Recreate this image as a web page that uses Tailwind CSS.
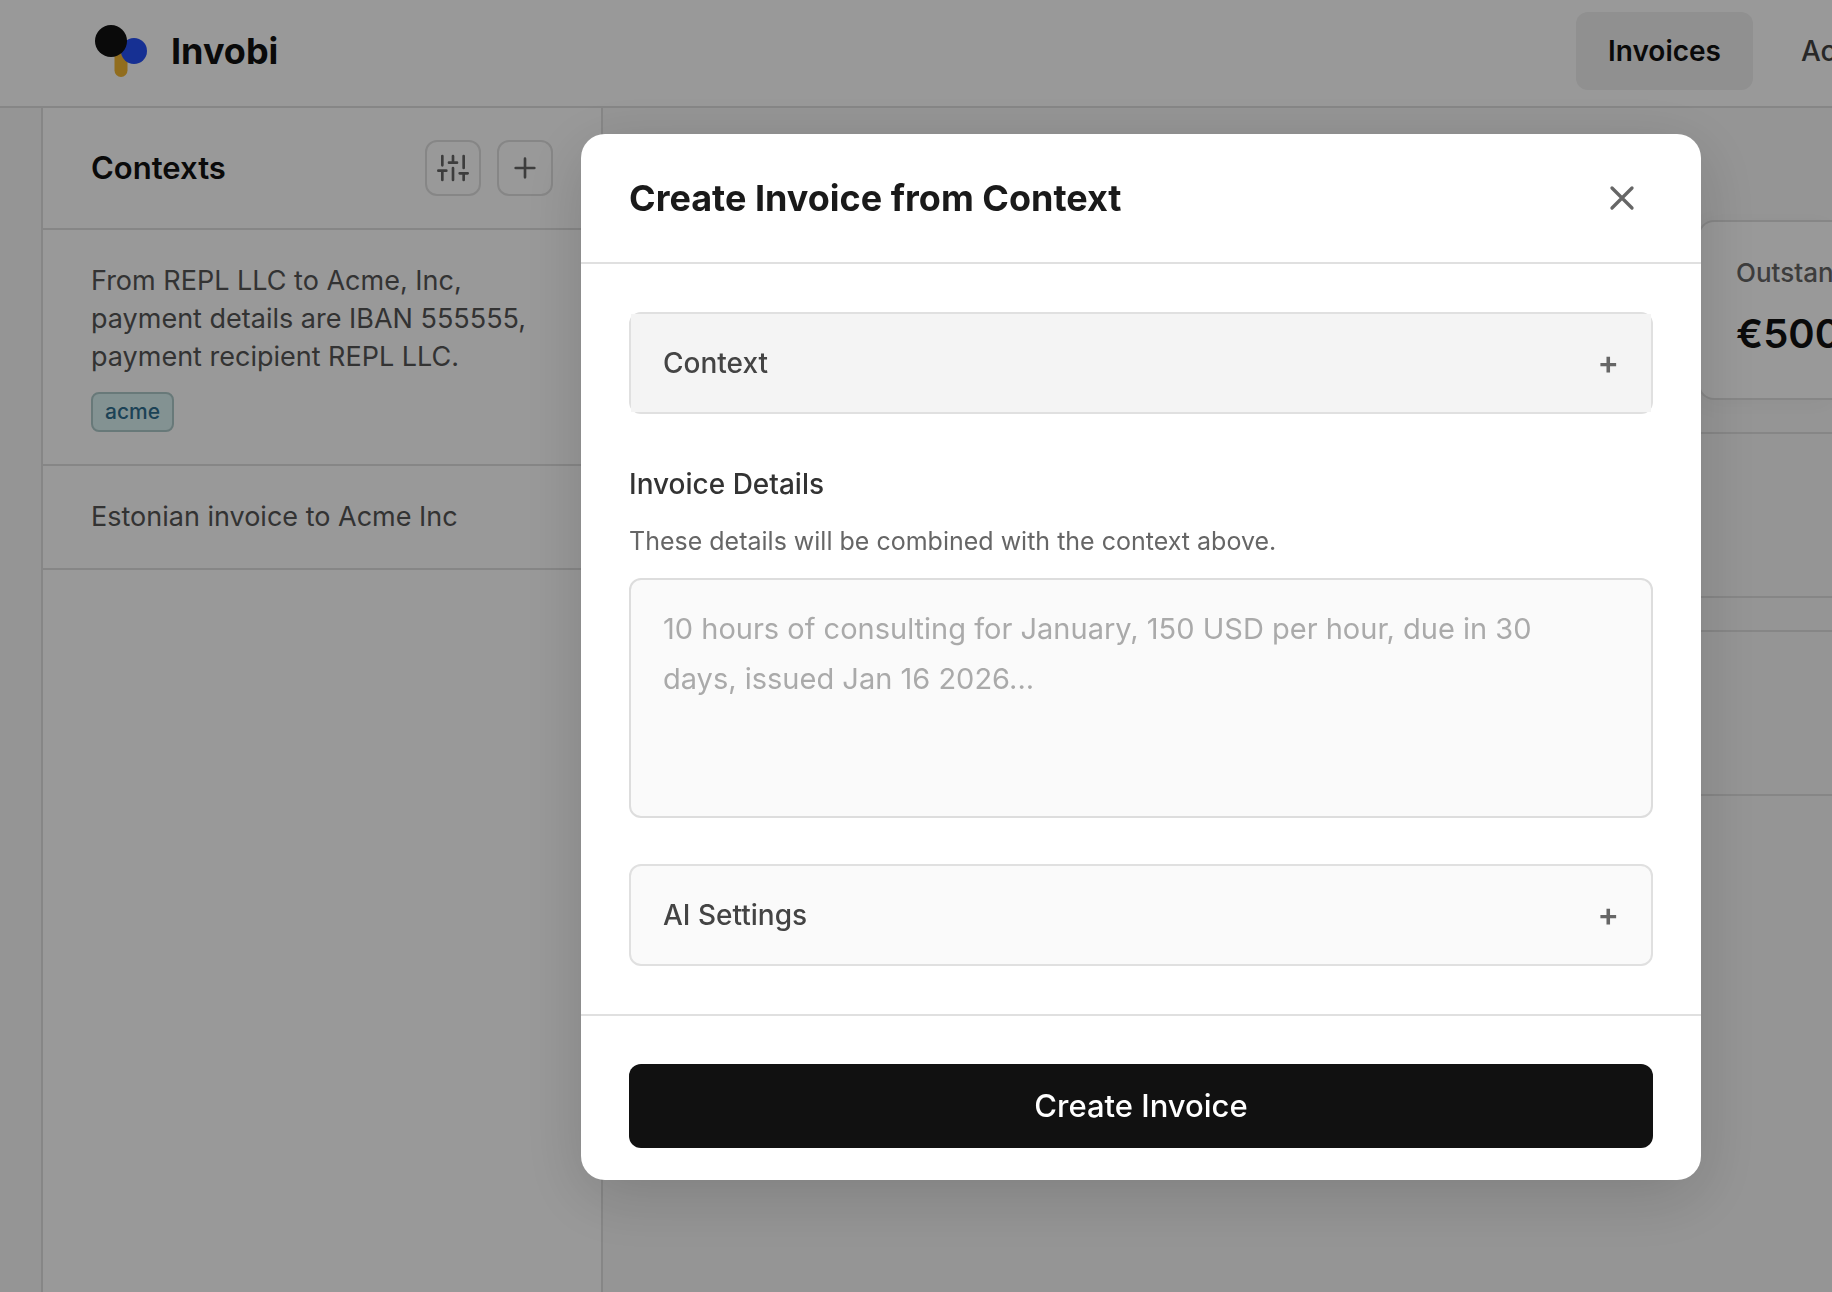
<!DOCTYPE html>
<html lang="en">
<head>
  <meta charset="UTF-8" />
  <meta name="viewport" content="width=device-width, initial-scale=1.0" />
  <title>Invobi</title>
  <script src="https://cdn.jsdelivr.net/npm/@tailwindcss/browser@4"></script>
</head>
<body class="flex h-screen flex-col overflow-hidden bg-[#f9f9f9] font-['Inter',sans-serif] text-[#111]">

  <!-- Header -->
  <header class="flex items-center overflow-hidden border-b-2 border-[#e0e0e0] bg-white pt-3 pb-4 pl-[95px]">
    <a href="#" class="flex items-center gap-6">
      <svg class="h-[52px] w-[52px]" viewBox="0 0 52 52" aria-hidden="true">
        <rect x="19.5" y="22" width="13" height="30" rx="6.5" fill="#f2b632" />
        <circle cx="39" cy="26" r="13" fill="#2550f5" />
        <circle cx="16" cy="16" r="16" fill="#111" />
      </svg>
      <span class="text-[36px] leading-none font-bold">Invobi</span>
    </a>
    <nav class="ml-auto flex w-64 shrink-0 gap-4 text-[28px] leading-[42px]">
      <a href="#" class="shrink-0 rounded-xl bg-[#f0f0f0] px-8 py-[18px] font-semibold">Invoices</a>
      <a href="#" class="shrink-0 rounded-xl px-8 py-[18px] font-medium text-[#444]">Account</a>
    </nav>
  </header>

  <div class="flex flex-1 pl-[41px]">
    <!-- Contexts sidebar -->
    <aside class="w-[562px] shrink-0 border-x-2 border-[#e0e0e0] bg-white">
      <div class="flex items-center gap-4 border-b-2 border-[#e0e0e0] px-12 py-8">
        <h2 class="mr-auto text-[31px] leading-[42px] font-semibold">Contexts</h2>
        <button type="button" aria-label="Settings" class="flex size-14 items-center justify-center rounded-xl border-2 border-[#e0e0e0] text-[#666]">
          <svg class="size-8" viewBox="0 0 24 24" fill="none" stroke="currentColor" stroke-width="2" stroke-linecap="round">
            <path d="M4 21v-7M4 10V3M12 21v-9M12 8V3M20 21v-5M20 12V3M1 14h6M9 8h6M17 16h6" />
          </svg>
        </button>
        <button type="button" aria-label="Add context" class="flex size-14 items-center justify-center rounded-xl border-2 border-[#e0e0e0] text-[#666]">
          <svg class="size-8" viewBox="0 0 24 24" fill="none" stroke="currentColor" stroke-width="2" stroke-linecap="round">
            <path d="M12 5v14M5 12h14" />
          </svg>
        </button>
      </div>
      <ul class="text-[27px] leading-[38px] text-[#555]">
        <li class="border-b-2 border-[#e0e0e0] px-12 py-8">
          <p>From REPL LLC to Acme, Inc, payment details are IBAN 555555, payment recipient REPL LLC.</p>
          <span class="mt-4 flex h-10 w-fit items-center rounded-lg border-2 border-[#aecaca] bg-[#dbf3f3] px-3 text-[21px] font-medium text-[#2f6f8f]">acme</span>
        </li>
        <li class="border-b-2 border-[#e0e0e0] px-12 py-8">
          <p>Estonian invoice to Acme Inc</p>
        </li>
      </ul>
    </aside>

    <!-- Invoices -->
    <main class="flex flex-1 flex-col gap-8 pt-28 pl-12">
      <div class="flex justify-end">
        <section class="h-[180px] w-[134px] overflow-hidden rounded-l-2xl border-y-2 border-l-2 border-[#e0e0e0] bg-white py-8 pl-9 shadow-[0_4px_24px_rgba(0,0,0,0.04)]">
          <h3 class="text-[26px] leading-[38px] font-medium text-[#666]">Outstanding</h3>
          <p class="mt-4 text-[40px] leading-[52px] font-semibold">€500.00</p>
        </section>
      </div>
      <div class="h-[166px] border-y-2 border-[#e0e0e0]"></div>
      <div class="h-[166px] border-y-2 border-[#e0e0e0]"></div>
    </main>
  </div>

  <!-- Dialog -->
  <div class="fixed inset-0 bg-black/40 pt-[134px] pl-[581px]">
    <div role="dialog" aria-labelledby="dialogTitle" class="w-[1120px] rounded-3xl bg-white shadow-[0_16px_64px_rgba(0,0,0,0.16)]">
      <div class="flex h-[130px] items-center justify-between border-b-2 border-[#e0e0e0] px-12">
        <h2 id="dialogTitle" class="text-[36px] font-bold text-[#1a1a1a]">Create Invoice from Context</h2>
        <button type="button" aria-label="Close" class="flex size-[62px] items-center justify-center text-[#666]">
          <svg class="size-10" viewBox="0 0 24 24" fill="none" stroke="currentColor" stroke-width="2" stroke-linecap="round">
            <path d="M18 6L6 18M6 6l12 12" />
          </svg>
        </button>
      </div>

      <form>
        <div class="p-12">
          <div class="rounded-xl border-2 border-[#e0e0e0]">
            <button type="button" class="flex h-[98px] w-full items-center justify-between bg-[#f4f4f4] px-8 text-[28px] font-medium text-[#444]">
              Context <span class="text-[32px] font-semibold text-[#666]">+</span>
            </button>
          </div>

          <label for="details" class="mt-12 block text-[28px] leading-[44px] font-medium text-[#333]">Invoice Details</label>
          <p id="detailsHint" class="mt-[14px] text-[25px] leading-[42px] text-[#666]">These details will be combined with the context above.</p>
          <textarea id="details" aria-describedby="detailsHint" class="mt-4 block h-60 w-full resize-none rounded-xl border-2 border-[#ddd] bg-[#fafafa] py-6 pr-16 pl-8 text-[29px] leading-[50px] placeholder:text-[#aaa]" placeholder="10 hours of consulting for January, 150 USD per hour, due in 30 days, issued Jan 16 2026..."></textarea>

          <div class="mt-[46px] rounded-xl border-2 border-[#e0e0e0] bg-[#fafafa]">
            <button type="button" class="flex h-[98px] w-full items-center justify-between px-8 text-[28px] font-medium text-[#444]">
              AI Settings <span class="text-[32px] font-semibold text-[#666]">+</span>
            </button>
          </div>
        </div>

        <div class="border-t-2 border-[#e0e0e0] px-12 pt-12 pb-8">
          <button type="submit" class="h-[84px] w-full rounded-xl bg-[#111] text-[31px] font-medium text-white">Create Invoice</button>
        </div>
      </form>
    </div>
  </div>
</body>
</html>
